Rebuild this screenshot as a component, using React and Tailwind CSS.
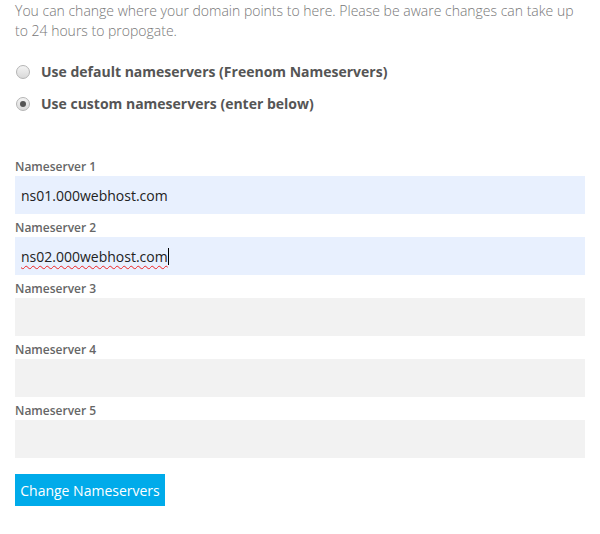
import React from "react";

const servers = [
  { label: "Nameserver 1", value: "ns01.000webhost.com" },
  { label: "Nameserver 2", value: "ns02.000webhost.com", active: true },
  { label: "Nameserver 3", value: "" },
  { label: "Nameserver 4", value: "" },
  { label: "Nameserver 5", value: "" },
];

function Radio({ checked }) {
  return (
    <span className="w-[14px] h-[14px] rounded-full border border-[#b5b5b5] bg-gradient-to-b from-[#f4f4f4] to-[#d9d9d9] flex items-center justify-center shrink-0">
      {checked && <span className="w-[6px] h-[6px] rounded-full bg-[#555]" />}
    </span>
  );
}

export default function App() {
  return (
    <div className="w-[600px] h-[534px] bg-white px-[15px] font-['Open_Sans',sans-serif] overflow-hidden">
      <p className="text-[14px] leading-[20px] font-light text-[#777] mt-[1px]">
        You can change where your domain points to here. Please be aware changes can take up to 24 hours to propogate.
      </p>

      <div className="mt-[21px] flex flex-col gap-[13px] pl-[1px]">
        <label className="flex items-center gap-[11px] text-[14px] leading-[19px] font-bold text-[#555]">
          <Radio />
          Use default nameservers (Freenom Nameservers)
        </label>
        <label className="flex items-center gap-[11px] text-[14px] leading-[19px] font-bold text-[#555]">
          <Radio checked />
          Use custom nameservers (enter below)
        </label>
      </div>

      <div className="mt-[40px] flex flex-col">
        {servers.map((s) => (
          <div key={s.label} className="flex flex-col">
            <span className="pt-[5px] text-[12px] leading-[18px] font-semibold text-[#666]">{s.label}</span>
            <div
              className={
                "h-[38px] flex items-center px-[6px] text-[14px] text-[#222] " +
                (s.value ? "bg-[#e8f0fe]" : "bg-[#f2f2f2]")
              }
            >
              {s.active ? (
                <>
                  <span className="underline decoration-wavy decoration-[#e22] decoration-1 underline-offset-[3px]">
                    {s.value}
                  </span>
                  <span className="w-[1px] h-[17px] bg-black" />
                </>
              ) : (
                s.value
              )}
            </div>
          </div>
        ))}
      </div>

      <button className="mt-[16px] h-[32px] w-[150px] bg-[#00abea] text-white text-[14px] flex items-center justify-center">
        Change Nameservers
      </button>
    </div>
  );
}
